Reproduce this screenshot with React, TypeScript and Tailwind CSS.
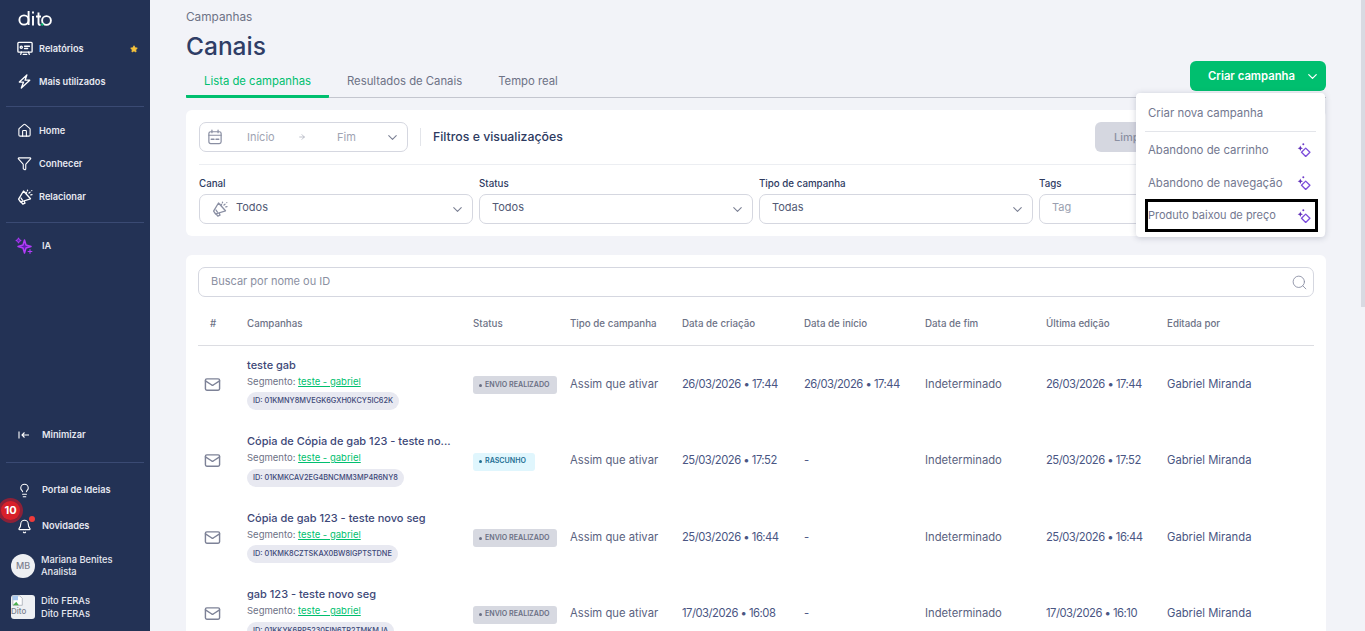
import { ArrowRight, Bell, ChevronDown, Funnel, Home, Lightbulb, Mail, Search, Star } from "lucide-react";

const rows = [
  { name: "teste gab", id: "01KMNY8MVEGK6GXH0KCY5IC62K", status: "done", created: "26/03/2026 • 17:44", start: "26/03/2026 • 17:44", edited: "26/03/2026 • 17:44" },
  { name: "Cópia de Cópia de gab 123 - teste no...", id: "01KMKCAV2EG4BNCMM3MP4R6NY8", status: "draft", created: "25/03/2026 • 17:52", start: "-", edited: "25/03/2026 • 17:52" },
  { name: "Cópia de gab 123 - teste novo seg", id: "01KMK8CZTSKAX0BW8IGPTSTDNE", status: "done", created: "25/03/2026 • 16:44", start: "-", edited: "25/03/2026 • 16:44" },
  { name: "gab 123 - teste novo seg", id: "01KKYK6RP5230FIN6TR2TMKMJA", status: "done", created: "17/03/2026 • 16:08", start: "-", edited: "17/03/2026 • 16:10" },
];

const tableCols = "grid grid-cols-[49px_226px_97px_112px_122px_121px_121px_121px_1fr]";

const MegaphoneIcon = ({ className }: { className: string }) => (
  <svg viewBox="0 0 16 16" fill="none" stroke="currentColor" strokeWidth="1.3" strokeLinecap="round" strokeLinejoin="round" className={className}>
    <path d="M6.5 2 13.5 9.8 3.6 13 1.6 10.2z" />
    <path d="M4 9l1.4 2.2M4.2 13l1.6 2.2 2.2-1-.8-2.2" />
    <path d="M10.5 1.2v.6M13 3.2l-1 .8M15 5.6l-1.2.2M14.8 1.6h.01M9 3.2l.6.8" />
  </svg>
);

const BoltIcon = () => (
  <svg viewBox="0 0 16 16" fill="none" stroke="currentColor" strokeWidth="1.4" strokeLinejoin="round" className="w-[15px] h-[15px]">
    <path d="M10.5 1 2.5 8.6H7L4.6 15l9-8.4H8.6z" />
  </svg>
);

const ReportIcon = () => (
  <svg viewBox="0 0 18 16" fill="none" stroke="currentColor" strokeWidth="1.5" strokeLinecap="round" className="w-[16px] h-[15px]">
    <rect x="1" y="1.2" width="16" height="10.8" rx="1" />
    <circle cx="4.8" cy="6.6" r="1.2" />
    <path d="M8.5 5.5h5.5M8.5 8h3.5M5 12l-.8 2.6M13 12l.8 2.6M7 14.6h4" />
  </svg>
);

const AiIcon = () => (
  <svg viewBox="0 0 18 18" fill="#5b1fb0" stroke="#b23cf8" strokeWidth="1.5" strokeLinejoin="round" className="w-[18px] h-[18px] mr-[9px]">
    <path d="M9.5 3 11 8 16 9.5 11 11 9.5 16 8 11 3 9.5 8 8z" />
    <path d="M3.5 .8 4.3 2.7 6.2 3.5 4.3 4.3 3.5 6.2 2.7 4.3.8 3.5 2.7 2.7z" strokeWidth="1" />
    <path d="M15 12.2v4.6M12.7 14.5h4.6" strokeWidth="1.1" />
  </svg>
);

const CalendarIcon = () => (
  <svg viewBox="0 0 16 18" fill="none" stroke="#8a8fa3" strokeWidth="1.4" strokeLinecap="round" className="w-[14px] h-[16px]">
    <rect x="1" y="3" width="14" height="13.5" rx="2" />
    <path d="M1 7h14M4.5 1v3M11.5 1v3" />
    <path d="M3.8 11.5h3M9.2 11.5h3" strokeWidth="1.8" />
  </svg>
);

const DiamondSpark = () => (
  <svg viewBox="0 0 14 14" className="w-[14px] h-[14px] shrink-0" fill="none">
    <path d="M3.3 2.6 4.1 4.5 6 5.3 4.1 6.1 3.3 8 2.5 6.1.6 5.3 2.5 4.5z" fill="#5f2fb8" />
    <path d="M8.7 5.1 12.9 9.3 8.7 13.5 4.5 9.3z" stroke="#7c4ddb" strokeWidth="1.3" strokeLinejoin="round" />
    <circle cx="6.3" cy="1.3" r="1" fill="#6d3bc9" />
  </svg>
);

const NavItem = ({ icon, label, extra }: { icon: React.ReactNode; label: string; extra?: React.ReactNode }) => (
  <div className="h-[33px] flex items-center pl-[17px] pr-3 text-[9.2px] font-semibold text-[#e6e8f0]">
    <span className="w-[22px] flex justify-start text-white">{icon}</span>
    <span>{label}</span>
    {extra && <span className="ml-auto">{extra}</span>}
  </div>
);

const Field = ({ label, value, icon, muted }: { label: string; value: string; icon?: React.ReactNode; muted?: boolean }) => (
  <div className="flex-1 min-w-0">
    <div className="text-[9.75px] font-medium text-[#2d3a5f] h-[20px] flex items-center">{label}</div>
    <div className="h-[30px] border border-[#d5d7e0] rounded-[7px] flex items-center pl-[12px] pr-[7px] bg-white">
      {icon}
      <span className={muted ? "mb-[3px] text-[11px] text-[#9a9fb0]" : "mb-[3px] text-[11px] text-[#525a75]"}>{value}</span>
      {!muted && <ChevronDown className="ml-auto w-[15px] h-[15px] text-[#7b8094]" strokeWidth={1.75} />}
    </div>
  </div>
);

const StatusBadge = ({ kind }: { kind: string }) =>
  kind === "done" ? (
    <span className="inline-flex items-center h-[18px] w-[84px] pl-[6px] rounded-[3px] bg-[#d7d9e1] text-[7.1px] font-semibold text-[#6a6f84]">
      <span className="w-[3px] h-[3px] rounded-full bg-[#6a6f84] mr-[3px]" />
      ENVIO REALIZADO
    </span>
  ) : (
    <span className="inline-flex items-center h-[18px] w-[62px] pl-[6px] rounded-[3px] bg-[#e0f6fd] text-[7.1px] font-semibold text-[#1f6f94]">
      <span className="w-[3px] h-[3px] rounded-full bg-[#1f6f94] mr-[3px]" />
      RASCUNHO
    </span>
  );

export default function App() {
  return (
    <div className="h-[631px] w-[1365px] overflow-hidden flex bg-[#f2f3f8] font-['Inter',sans-serif]">
      {/* sidebar */}
      <aside className="w-[150px] shrink-0 bg-[#233255] flex flex-col relative">
        <div className="h-[32px] pl-[18px] pt-[10px]">
          <svg viewBox="0 0 35 16" className="w-[35px] h-[16px]" fill="none" stroke="#fff" strokeWidth="1.9">
            <circle cx="6" cy="10" r="4.6" />
            <path d="M10.6 1v14M15 6v9.5M15 1.5v2M20.5 2.5v10.5q0 2 2 2M18 6.5h5" />
            <circle cx="28.5" cy="10.5" r="4.4" />
            <circle cx="24.3" cy="14.5" r="1.2" fill="#00bf6f" stroke="none" />
          </svg>
        </div>
        <NavItem icon={<ReportIcon />} label="Relatórios" extra={<Star className="w-[8px] h-[8px] fill-[#f8c43c] text-[#f8c43c]" />} />
        <NavItem icon={<BoltIcon />} label="Mais utilizados" />
        <div className="mx-[6px] mt-[8px] mb-[7px] border-t border-[#3a4a73]" />
        <NavItem icon={<Home className="w-[15px] h-[15px]" strokeWidth={1.75} />} label="Home" />
        <NavItem icon={<Funnel className="w-[15px] h-[15px]" strokeWidth={1.75} />} label="Conhecer" />
        <NavItem icon={<MegaphoneIcon className="w-[16px] h-[16px]" />} label="Relacionar" />
        <div className="mx-[6px] mt-[9px] mb-[6px] border-t border-[#3a4a73]" />
        <div className="h-[33px] flex items-center pl-[15px] text-[9.2px] font-semibold text-[#e6e8f0]">
          <AiIcon />
          IA
        </div>
        <div className="flex-1" />
        <div className="h-[33px] flex items-center pl-[18px] text-[9.2px] font-semibold text-[#e6e8f0]">
          <svg viewBox="0 0 12 8" fill="none" stroke="#fff" strokeWidth="1.1" className="w-[12px] h-[8px] mr-[12px]">
            <path d="M1 .5v7M11 4H4M6.5 1.5 4 4l2.5 2.5" />
          </svg>
          Minimizar
        </div>
        <div className="mx-[6px] mt-[11px] mb-[9px] border-t border-[#3a4a73]" />
        <div className="h-[36px] flex items-center pl-[17px] text-[9.2px] font-semibold text-[#e6e8f0]">
          <Lightbulb className="w-[15px] h-[15px] mr-[10px] text-white" strokeWidth={1.75} />
          Portal de Ideias
        </div>
        <div className="h-[36px] flex items-center pl-[17px] text-[9.2px] font-semibold text-[#e6e8f0]">
          <Bell className="w-[15px] h-[15px] mr-[10px] text-white" strokeWidth={1.75} />
          Novidades
        </div>
        <div className="h-[43px] flex items-center pl-[11px] text-[9.3px] font-medium text-[#e6e8f0] leading-[12px]">
          <span className="w-[24px] h-[24px] rounded-full bg-[#eef0f3] text-[#7d8290] text-[9px] flex items-center justify-center mr-[6px]">MB</span>
          <span>Mariana Benites<br />Analista</span>
        </div>
        <div className="h-[39px] mb-[5px] flex items-center pl-[11px] text-[9.3px] font-medium text-[#e6e8f0] leading-[13px]">
          <span className="w-[24px] h-[24px] rounded-[3px] bg-[#eef0f3] text-[#7d8290] text-[8px] leading-[9px] mr-[6px] overflow-hidden flex flex-col">
            <svg viewBox="0 0 14 14" className="w-[12px] h-[12px] ml-[1px] shrink-0">
              <path d="M1 1h8l3 3v8H1z" fill="#fff" stroke="#9aa0a8" strokeWidth="0.8" />
              <path d="M1 12l4-4 3 4z" fill="#4caf50" />
              <path d="M1 1h6v5H1z" fill="#a8c8f0" />
            </svg>
            Dito
          </span>
          <span>Dito FERAs<br />Dito FERAs</span>
        </div>
        <div className="absolute left-[1px] top-[501px] w-[19px] h-[19px] rounded-full bg-[#d8202a] ring-[3px] ring-[#8c2138] text-white text-[11px] font-bold flex items-center justify-center">10</div>
        <div className="absolute left-[29px] top-[516px] w-[6px] h-[6px] rounded-full bg-[#ef3b3b]" />
      </aside>

      {/* content */}
      <main className="flex-1 min-w-0 pl-[36px] pr-[39px] relative">
        <div className="text-[11.8px] text-[#6d7286] pt-[10px] leading-[15px]">Campanhas</div>
        <h1 className="text-[24.5px] font-medium text-[#2f3d66] leading-[30px] mt-[6px]">Canais</h1>
        <div className="flex items-end justify-between h-[38px] border-b border-[#c4c6cf] mt-[-1px]">
          <div className="flex text-[11.3px] h-full items-center text-[#6d7286]">
            <div className="h-full w-[143px] flex items-center justify-center text-[#00bf6f] border-b-[3px] border-[#00bf6f] rounded-b-[1px] translate-y-[1px] pt-[6px]">Lista de campanhas</div>
            <div className="ml-[18px] pt-[5px]">Resultados de Canais</div>
            <div className="ml-[36px] pt-[5px]">Tempo real</div>
          </div>
        </div>

        <section className="bg-white rounded-[6px] mt-[12px] px-[13px] h-[126px]">
          <div className="flex items-start pt-[12px] h-[55px] border-b border-[#eceef2]">
            <div className="w-[209px] h-[30px] border border-[#d5d7e0] rounded-[7px] flex items-center pl-[8px] pr-[7px] text-[11px] text-[#a0a4b3]">
              <CalendarIcon />
              <span className="ml-[25px] w-[48px]">Início</span>
              <ArrowRight className="w-[8px] h-[8px] ml-[3px]" />
              <span className="ml-[31px]">Fim</span>
              <ChevronDown className="ml-auto w-[15px] h-[15px] text-[#7b8094]" strokeWidth={1.75} />
            </div>
            <div className="h-[18px] border-l border-[#e3e5ea] ml-[12px] mr-[12px] mt-[6px]" />
            <span className="text-[12.3px] font-medium text-[#2d3a5f] leading-[30px]">Filtros e visualizações</span>
            <div className="ml-auto w-[218px] h-[30px] flex">
              <div className="w-[105px] h-[30px] rounded-[6px] bg-[#d5d7e0] text-[11px] font-medium text-[#8b90a2] flex items-center pl-[19px]">Limpar</div>
            </div>
          </div>
          <div className="flex gap-[6px] pt-[9px]">
            <Field label="Canal" value="Todos" icon={<MegaphoneIcon className="w-[16px] h-[16px] text-[#8a8fa3] mr-[8px]" />} />
            <Field label="Status" value="Todos" />
            <Field label="Tipo de campanha" value="Todas" />
            <Field label="Tags" value="Tag" muted />
          </div>
        </section>

        <section className="bg-white rounded-[6px] mt-[19px] px-[12px] pt-[12px] h-[400px]">
          <div className="h-[30px] border border-[#d5d7e0] rounded-[7px] flex items-center pl-[12px] pr-[5px] text-[11px] text-[#8b90a2]">
            <span className="mb-[1px]">Buscar por nome ou ID</span>
            <Search className="ml-auto w-[17px] h-[17px] text-[#8a8fa3]" strokeWidth={1.25} />
          </div>
          <div className={`${tableCols} h-[49px] pt-[7px] items-center border-b border-[#dcdde2] text-[9.75px] font-medium text-[#6d7286]`}>
            <span className="pl-[12px]">#</span>
            <span>Campanhas</span>
            <span>Status</span>
            <span>Tipo de campanha</span>
            <span>Data de criação</span>
            <span>Data de início</span>
            <span>Data de fim</span>
            <span>Última edição</span>
            <span>Editada por</span>
          </div>
          {rows.map((row) => (
            <div key={row.id} className={`${tableCols} h-[76.5px] items-center text-[11.25px] text-[#4a5683]`}>
              <Mail className="ml-[6px] w-[17px] h-[17px] text-[#7d8297]" strokeWidth={2} />
              <div className="leading-none pt-[1px]">
                <div className="text-[11px] text-[#3d4878] font-medium whitespace-nowrap">{row.name}</div>
                <div className="text-[9.5px] text-[#6d7286] mt-[6px]">
                  Segmento: <span className="text-[#00bf6f] underline">teste - gabriel</span>
                </div>
                <span className="inline-flex items-center mt-[6px] h-[18px] px-[6px] rounded-full bg-[#e8e9f1] text-[7.35px] font-medium text-[#3d4878] whitespace-nowrap">ID: {row.id}</span>
              </div>
              <div><StatusBadge kind={row.status} /></div>
              <span className="text-[#5a6280]">Assim que ativar</span>
              <span className="tracking-[-0.5px]">{row.created}</span>
              <span className="tracking-[-0.5px]">{row.start}</span>
              <span className="text-[#5a6280]">Indeterminado</span>
              <span className="tracking-[-0.5px]">{row.edited}</span>
              <span>Gabriel Miranda</span>
            </div>
          ))}
        </section>

        {/* create button + dropdown */}
        <div className="absolute right-[39px] top-[61px] w-[136px] h-[30px] rounded-[6px] bg-[#00bf6f] text-white text-[11.3px] font-semibold flex items-center pl-[18px]">
          Criar campanha
          <ChevronDown className="ml-auto mr-[6px] w-[15px] h-[15px]" strokeWidth={2} />
        </div>
        <div className="absolute right-[40px] top-[93px] w-[189px] h-[144px] bg-white rounded-[4px] shadow-[0_1px_6px_rgba(40,50,80,0.22)] text-[11.4px] text-[#737890]">
          <div className="h-[39px] mx-[9px] pt-[4px] flex items-center px-[3px] border-b border-[#e3e5ea]">Criar nova campanha</div>
          <div className="h-[33px] flex items-center pl-[12px] pr-[14px] mt-[1px]"><span className="mt-[2px]">Abandono de carrinho</span><span className="ml-auto mt-[1px]"><DiamondSpark /></span></div>
          <div className="h-[33px] flex items-center pl-[12px] pr-[14px]"><span className="mt-[2px]">Abandono de navegação</span><span className="ml-auto mt-[1px]"><DiamondSpark /></span></div>
          <div className="h-[33px] ml-[9px] mr-[7px] border-[3px] border-black flex items-center pl-0 pr-[4px] text-[11px]">Produto baixou de preço<span className="ml-auto"><DiamondSpark /></span></div>
        </div>

        {/* page scrollbar */}
        <div className="absolute right-0 top-0 w-[4px] h-[631px] bg-[#f2f3f8]">
          <div className="w-[4px] h-[307px] bg-[#d8dae2]" />
        </div>
      </main>
    </div>
  );
}
